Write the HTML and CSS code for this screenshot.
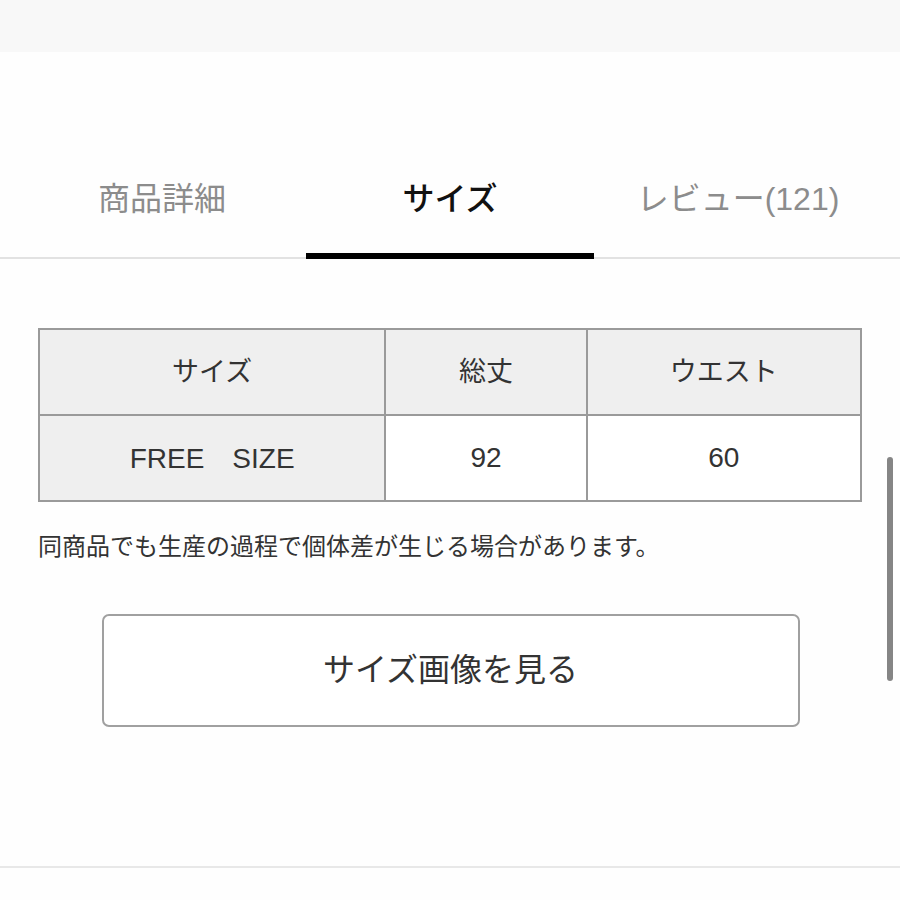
FILE: index.html
```html
<!DOCTYPE html>
<html lang="ja">
<head>
    <meta charset="UTF-8">
    <title>サイズ</title>
    <link rel="stylesheet" href="styles.css">
</head>
<body>
    <div class="topbar"></div>

    <div class="tabs">
        <div class="tab">商品詳細</div>
        <div class="tab active">サイズ</div>
        <div class="tab">レビュー(121)</div>
    </div>

    <div class="content">
        <table class="size-table">
            <tr>
                <th class="c1">サイズ</th>
                <th class="c2">総丈</th>
                <th class="c3">ウエスト</th>
            </tr>
            <tr>
                <th>FREE　SIZE</th>
                <td>92</td>
                <td>60</td>
            </tr>
        </table>

        <p class="note">同商品でも生産の過程で個体差が生じる場合があります。</p>

        <div class="btn-row">
            <button class="btn">サイズ画像を見る</button>
        </div>
    </div>

    <div class="divider"></div>

    <!-- scroll indicator -->
    <div class="scrollbar"></div>
</body>
</html>
```

FILE: styles.css
```css
* {
    margin: 0;
    padding: 0;
    box-sizing: border-box;
}
body {
    background: #fefefe;
    font-family: "Liberation Sans", "Noto Sans CJK JP", sans-serif;
    color: #333;
    width: 900px;
    height: 900px;
    overflow: hidden;
    position: relative;
}
.topbar {
    height: 52px;
    background: #f8f8f8;
}
.tabs {
    display: flex;
    margin-top: 88px;
    padding: 0 18px;
    border-bottom: 2px solid #e2e2e2;
}
.tab {
    flex: 1;
    text-align: center;
    font-size: 32px;
    line-height: 48px;
    padding-top: 35px;
    padding-bottom: 30px;
    color: #8c8c8c;
    border-bottom: 6px solid transparent;
    margin-bottom: -2px;
}
.tab.active {
    color: #111;
    font-weight: 500;
    border-bottom-color: #000;
}
.content {
    padding: 69px 38px 0;
}
.size-table {
    width: 824px;
    border-collapse: collapse;
    font-size: 27px;
    text-align: center;
}
.size-table th,
.size-table td {
    border: 2px solid #9a9a9a;
    height: 86px;
    padding-bottom: 5px;
    font-weight: 400;
    color: #333;
}
.size-table th {
    background: #efefef;
}
.size-table td {
    background: #fff;
    padding-bottom: 1px;
}
.size-table tr + tr th,
.size-table td {
    font-size: 28px;
}
.size-table .c1 { width: 347px; }
.size-table .c2 { width: 202px; }
.size-table .c3 { width: 275px; }
.note {
    margin-top: 28px;
    font-size: 24px;
    line-height: 34px;
}
.btn-row {
    display: flex;
    justify-content: center;
    margin-top: 50px;
}
.btn {
    width: 698px;
    height: 113px;
    padding-bottom: 8px;
    background: #fff;
    border: 2px solid #a0a0a0;
    border-radius: 7px;
    font-family: inherit;
    font-size: 32px;
    color: #333;
    margin-left: 1px;
}
.divider {
    margin-top: 139px;
    border-top: 2px solid #e8e8e8;
}
.scrollbar {
    position: absolute;
    left: 887px;
    top: 457px;
    width: 6px;
    height: 224px;
    border-radius: 3px;
    background: #858585;
}
```
